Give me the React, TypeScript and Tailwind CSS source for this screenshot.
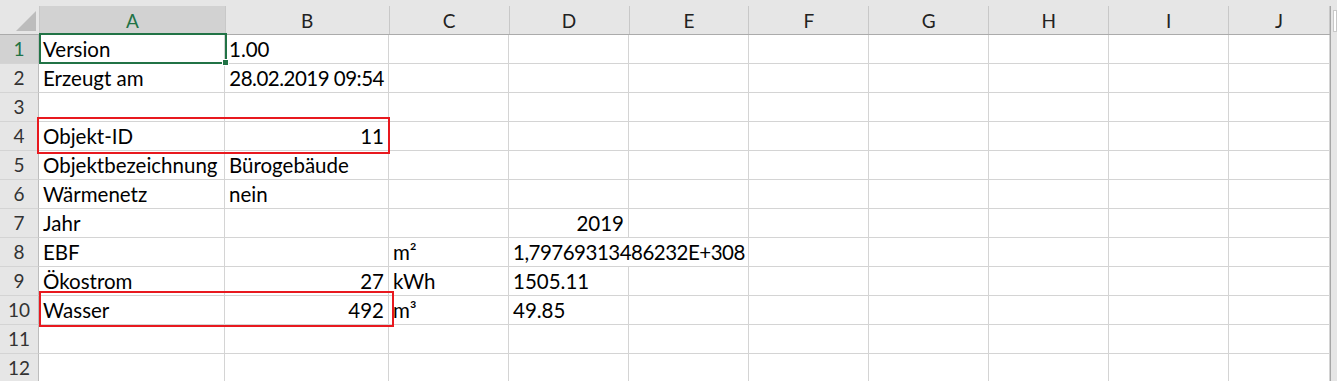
import React from "react";

const cols = [
  { key: "A", w: "w-[186px]" },
  { key: "B", w: "w-[164px]" },
  { key: "C", w: "w-[120px]" },
  { key: "D", w: "w-[120px]" },
  { key: "E", w: "w-[120px]" },
  { key: "F", w: "w-[120px]" },
  { key: "G", w: "w-[120px]" },
  { key: "H", w: "w-[120px]" },
  { key: "I", w: "w-[120px]" },
  { key: "J", w: "w-[101px]" },
];

type Cell = { t: string; right?: boolean; spill?: boolean; tight?: boolean };

const rows: Record<number, Record<string, Cell>> = {
  1: { A: { t: "Version" }, B: { t: "1.00" } },
  2: { A: { t: "Erzeugt am" }, B: { t: "28.02.2019 09:54", right: true, tight: true } },
  3: {},
  4: { A: { t: "Objekt-ID" }, B: { t: "11", right: true } },
  5: { A: { t: "Objektbezeichnung" }, B: { t: "Bürogebäude" } },
  6: { A: { t: "Wärmenetz" }, B: { t: "nein" } },
  7: { A: { t: "Jahr" }, D: { t: "2019", right: true } },
  8: { A: { t: "EBF" }, C: { t: "m²" }, D: { t: "1,79769313486232E+308", spill: true, tight: true } },
  9: { A: { t: "Ökostrom" }, B: { t: "27", right: true }, C: { t: "kWh" }, D: { t: "1505.11" } },
  10: { A: { t: "Wasser" }, B: { t: "492", right: true }, C: { t: "m³" }, D: { t: "49.85" } },
  11: {},
  12: {},
};

export default function App() {
  return (
    <div
      className="relative w-[1337px] h-[381px] overflow-hidden bg-[#e6e6e6] text-black"
      style={{ fontFamily: "Lato, 'Liberation Sans', sans-serif" }}
    >
      <div className="h-[6px]" />
      <div className="flex">
        <div className="w-[1331px] bg-white border-r border-[#a6a6a6]">
          {/* column headers */}
          <div className="flex h-[29px] bg-[#e6e6e6] border-b border-[#ababab]">
            <div className="w-[40px] flex items-end justify-end p-[3px] border-r border-[#c8c8c8]">
              <div className="w-0 h-0 border-l-[20px] border-l-transparent border-b-[20px] border-b-[#bcbcbc]" />
            </div>
            {cols.map((c) => (
              <div
                key={c.key}
                className={`${c.w} flex items-center justify-center pt-[2px] text-[19px] border-r border-[#c8c8c8] ${
                  c.key === "A" ? "bg-[#d2d2d2] text-[#217346]" : "text-[#222]"
                }`}
              >
                {c.key}
              </div>
            ))}
          </div>
          {/* data rows */}
          {Object.keys(rows).map((k) => {
            const n = Number(k);
            const r = rows[n];
            return (
              <div key={n} className="flex h-[29px]">
                <div
                  className={`w-[40px] flex items-center justify-center pt-[1px] text-[19px] border-r border-[#bdbdbd] border-b border-b-[#d4d4d4] ${
                    n === 1 ? "bg-[#d2d2d2] text-[#217346]" : "bg-[#e6e6e6] text-[#333]"
                  }`}
                >
                  {n}
                </div>
                {cols.map((c) => {
                  const cell = r[c.key];
                  const noRight = n === 8 && c.key === "D";
                  return (
                    <div
                      key={c.key}
                      className={`${c.w} shrink-0 flex items-end pb-[2px] px-[4px] text-[20.5px] leading-[24px] whitespace-nowrap border-b border-[#d4d4d4] ${
                        noRight ? "" : "border-r"
                      } ${cell?.right ? "justify-end" : "justify-start"} ${
                        cell?.spill ? "relative z-10 overflow-visible" : "overflow-hidden"
                      } ${cell?.tight ? "tracking-[-0.5px]" : ""}`}
                    >
                      {cell?.t}
                    </div>
                  );
                })}
              </div>
            );
          })}
        </div>
        <div className="w-[6px] flex flex-col pt-[4px] pl-[2px]">
          <div className="w-[4px] h-[22px] bg-white border border-[#c8c8c8]" />
        </div>
      </div>

      {/* active cell selection */}
      <div className="absolute left-[39px] top-[33px] w-[188px] h-[31px] border-2 border-[#217346] pointer-events-none" />
      <div className="absolute left-[222px] top-[59px] w-[7px] h-[7px] bg-[#217346] border border-white" />

      {/* red highlight boxes */}
      <div className="absolute left-[37px] top-[117px] w-[353px] h-[37px] border-2 border-[#e8191f] pointer-events-none" />
      <div className="absolute left-[39px] top-[291px] w-[355px] h-[36px] border-2 border-[#e8191f] pointer-events-none" />
    </div>
  );
}
